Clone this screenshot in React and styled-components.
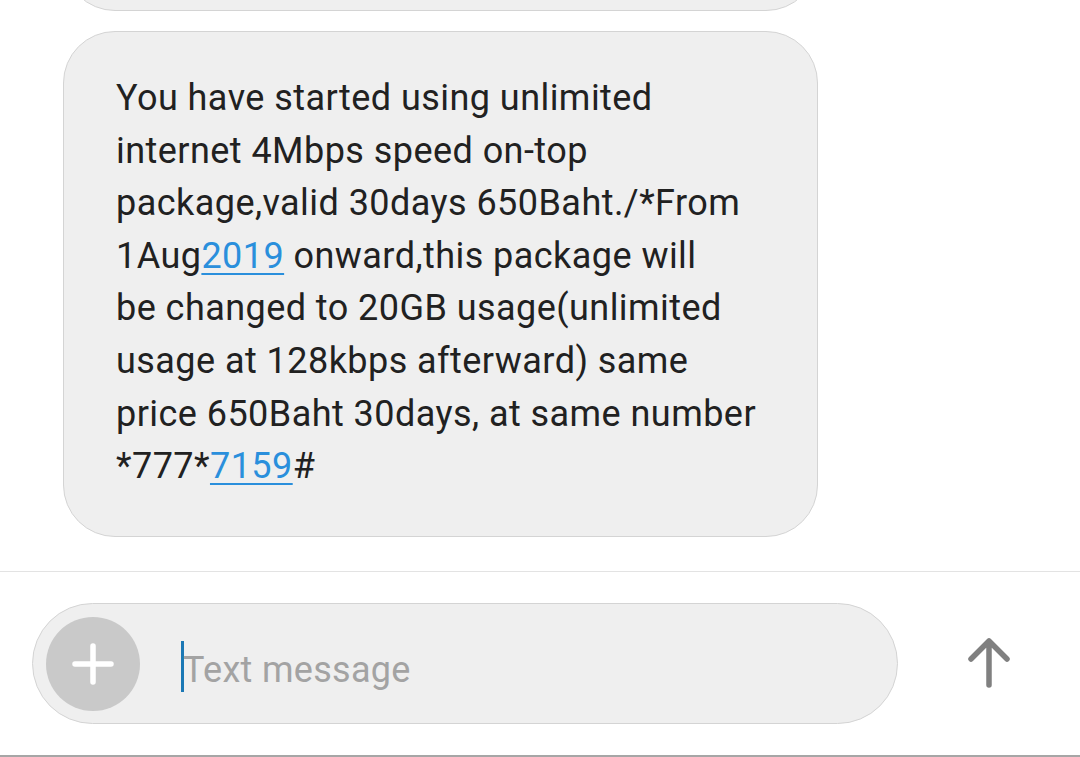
import React from 'react';
import styled, { createGlobalStyle } from 'styled-components';

const GlobalStyle = createGlobalStyle`
    html, body {
        margin: 0;
        padding: 0;
        background: #ffffff;
    }
    body {
        font-family: Roboto, "Noto Sans", "Liberation Sans", sans-serif;
        -webkit-font-smoothing: antialiased;
    }
`;

const Screen = styled.div`
    width: 1080px;
    height: 757px;
    display: flex;
    flex-direction: column;
    overflow: hidden;
    background: #ffffff;
`;

const Thread = styled.div`
    flex: 1;
    display: flex;
    flex-direction: column;
    align-items: flex-start;
    gap: 20px;
    padding-left: 63px;
    border-bottom: 1px solid #e3e3e3;
    overflow: hidden;
`;

const Bubble = styled.div`
    box-sizing: border-box;
    width: 755px;
    background: #efefef;
    border: 1px solid #d4d4d4;
    border-radius: 52px;
    padding: 40px 30px 43px 52px;
    font-size: 36px;
    line-height: 52.6px;
    color: #212121;
    letter-spacing: 0.45px;
`;

const PrevBubble = styled(Bubble)`
    height: 200px;
    margin-top: -189px;
    flex-shrink: 0;
`;

const Link = styled.a`
    color: #2a8fdc;
    text-decoration: underline;
    text-decoration-thickness: 2px;
    text-underline-offset: 5px;
`;

const Composer = styled.div`
    height: 185px;
    flex-shrink: 0;
    display: flex;
    align-items: flex-start;
    padding: 31px 0 0 32px;
    box-sizing: border-box;
    border-bottom: 2px solid #a6a6a6;
`;

const InputPill = styled.div`
    box-sizing: border-box;
    width: 866px;
    height: 121px;
    border-radius: 61px;
    background: #efefef;
    border: 1px solid #d4d4d4;
    display: flex;
    align-items: center;
    padding-left: 13px;
`;

const AddButton = styled.div`
    width: 94px;
    height: 94px;
    border-radius: 50%;
    background: #c9c9c9;
    display: flex;
    align-items: center;
    justify-content: center;
    flex-shrink: 0;
`;

const Field = styled.div`
    display: flex;
    align-items: center;
    margin-left: 41px;
    margin-top: 6px;
    height: 52px;
`;

const Caret = styled.span`
    width: 3px;
    height: 51px;
    background: #1b78b5;
    margin-right: -1px;
`;

const Placeholder = styled.span`
    font-size: 36px;
    letter-spacing: 0.3px;
    color: #a3a3a3;
    line-height: 52px;
    margin-top: 6px;
`;

const SendButton = styled.div`
    flex: 1;
    display: flex;
    justify-content: center;
    padding-top: 33px;
`;

const PlusIcon = () => (
    <svg width="44" height="44" viewBox="0 0 44 44">
        <path d="M22 4 V40 M4 22 H40" stroke="#ffffff" strokeWidth="5.5" strokeLinecap="round" />
    </svg>
);

const ArrowUpIcon = () => (
    <svg width="44" height="52" viewBox="0 0 44 52">
        <path d="M22 49 V5 M4 23 L22 5 L40 23" stroke="#808080" strokeWidth="5.5" strokeLinecap="round" strokeLinejoin="round" fill="none" />
    </svg>
);

const App = () => {
    return (
        <Screen>
            <GlobalStyle />
            <Thread>
                <PrevBubble />
                <Bubble>
                    You have started using unlimited<br />
                    internet 4Mbps speed on-top<br />
                    package,valid 30days 650Baht./*From<br />
                    1Aug<Link>2019</Link> onward,this package will<br />
                    be changed to 20GB usage(unlimited<br />
                    usage at 128kbps afterward) same<br />
                    price 650Baht 30days, at same number<br />
                    *777*<Link>7159</Link>#
                </Bubble>
            </Thread>
            <Composer>
                <InputPill>
                    <AddButton>
                        <PlusIcon />
                    </AddButton>
                    <Field>
                        <Caret />
                        <Placeholder>Text message</Placeholder>
                    </Field>
                </InputPill>
                <SendButton>
                    <ArrowUpIcon />
                </SendButton>
            </Composer>
        </Screen>
    );
};

export default App;
